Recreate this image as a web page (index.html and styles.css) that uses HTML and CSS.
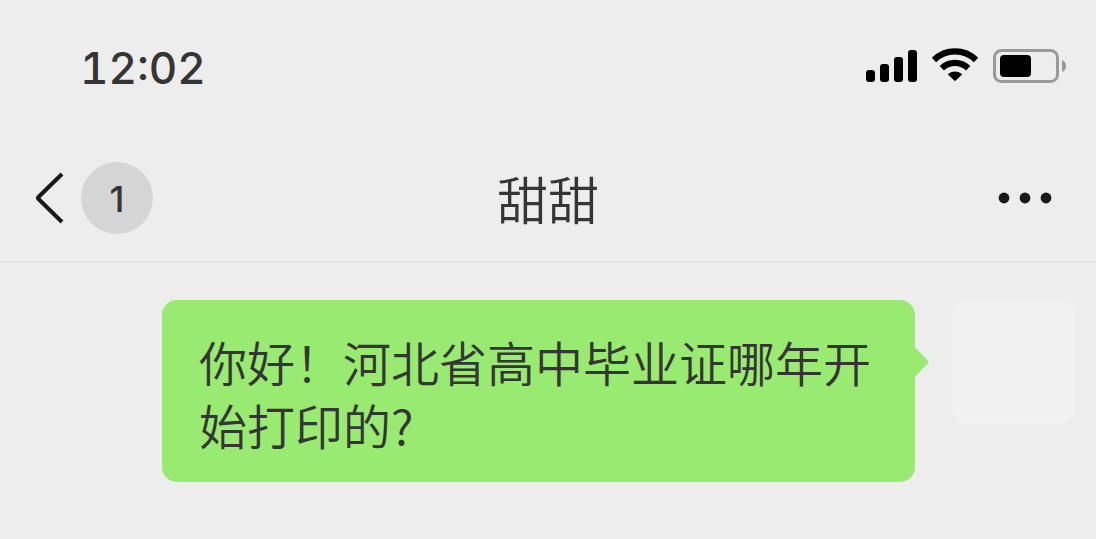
FILE: index.html
```html
<!DOCTYPE html>
<html lang="zh-CN">
<head>
    <meta charset="UTF-8">
    <meta name="viewport" content="width=device-width, initial-scale=1.0">
    <title>甜甜</title>
    <link rel="stylesheet" href="styles.css">
</head>
<body>
    <div class="status-bar">
        <time class="clock">12:02</time>
        <div class="status-icons">
            <svg width="51" height="34" viewBox="0 0 51 34" aria-hidden="true">
                <rect x="0" y="21" width="9" height="12" rx="3"/>
                <rect x="14" y="15" width="9" height="18" rx="3"/>
                <rect x="28" y="8" width="9" height="25" rx="3"/>
                <rect x="42" y="1" width="9" height="32" rx="3"/>
            </svg>
            <svg width="48" height="36" viewBox="0 -1 48 36" aria-hidden="true">
                <g fill="none" stroke="#000" stroke-width="6.2">
                    <path d="M3 11a30 30 0 0 1 42 0"/>
                    <path d="M10.800 19.200a18.800 18.800 0 0 1 26.400 0"/>
                </g>
                <path d="M17.400 24.800q6.600-4.800 13.200 0q.5.6 0 1.200l-5.900 5.600q-.7.600-1.400 0l-5.900-5.600q-.5-.6 0-1.200z"/>
            </svg>
            <svg width="74" height="34" viewBox="0 0 74 34" aria-hidden="true">
                <rect x="1.500" y="1.500" width="63" height="31" rx="7" fill="none" stroke="#999" stroke-width="3"/>
                <rect x="7" y="6" width="31" height="22" rx="4"/>
                <path d="M69 11q4 1.500 4 6t-4 6z" fill="#999"/>
            </svg>
        </div>
    </div>

    <header class="nav-bar">
        <button class="back-button" type="button" aria-label="返回">
            <svg width="30" height="52" viewBox="0 0 30 52" aria-hidden="true">
                <path d="M28 2L4.500 25q-1 1 0 2L28 50" fill="none" stroke="#191919" stroke-width="4"/>
            </svg>
            <span class="unread">1</span>
        </button>
        <h1 class="chat-title">甜甜</h1>
        <button class="more-button" type="button" aria-label="更多">
            <svg width="54" height="12" viewBox="0 0 54 12" fill="#191919" aria-hidden="true">
                <circle cx="6" cy="6" r="5.400"/>
                <circle cx="27" cy="6" r="5.400"/>
                <circle cx="48" cy="6" r="5.400"/>
            </svg>
        </button>
    </header>

    <main class="messages">
        <div class="message">
            <p class="bubble">你好！河北省高中毕业证哪年开始打印的?</p>
            <div class="avatar"></div>
        </div>
    </main>
</body>
</html>
```
FILE: styles.css
```css
* {
    box-sizing: border-box;
}

body {
    margin: 0;
    background-color: #ededed;
    color: #353535;
    font-family: "Noto Sans CJK SC", sans-serif;
}

button {
    display: flex;
    align-items: center;
    padding: 0;
    border: none;
    background: none;
    color: inherit;
    cursor: pointer;
}

svg {
    display: block;
}

.status-bar {
    display: flex;
    justify-content: space-between;
    align-items: center;
    height: 135px;
    padding: 0 29px 3px 80px;
}

.clock {
    font-family: Inter, sans-serif;
    font-size: 44px;
    font-weight: 500;
    font-variant-numeric: tabular-nums;
    line-height: 1;
    padding-top: 4px;
}

.status-icons {
    display: flex;
    align-items: center;
    gap: 14px;
}

.nav-bar {
    display: grid;
    grid-template-columns: 1fr auto 1fr;
    align-items: center;
    height: 127px;
    padding: 0 34px;
    border-bottom: 1px solid #dcdcdc;
}

.back-button {
    gap: 17px;
    justify-self: start;
}

.unread {
    width: 72px;
    height: 72px;
    border-radius: 50%;
    background-color: #d5d5d5;
    font-family: Inter, sans-serif;
    font-size: 36px;
    font-weight: 500;
    line-height: 74px;
    text-align: center;
}

.chat-title {
    margin: 0;
    font-size: 51px;
    font-weight: 350;
    line-height: 72px;
}

.more-button {
    justify-self: end;
    padding: 10px;
}

.messages {
    padding: 38px 21px;
}

.message {
    display: flex;
    justify-content: flex-end;
    align-items: flex-start;
    gap: 37px;
    padding-left: 141px;
}

.bubble {
    position: relative;
    margin: 0;
    padding: 30px 37px 26px;
    border-radius: 15px;
    background-color: #98ea70;
    font-size: 48px;
    font-weight: 350;
    line-height: 63px;
}

/* little tail pointing at the avatar */
.bubble::after {
    content: "";
    position: absolute;
    top: 51px;
    right: -10px;
    width: 22px;
    height: 22px;
    border-radius: 3px;
    background-color: #98ea70;
    transform: rotate(45deg);
}

.avatar {
    flex: none;
    width: 123px;
    height: 123px;
    border-radius: 15px;
    background-color: #f1f1f1;
}
```
